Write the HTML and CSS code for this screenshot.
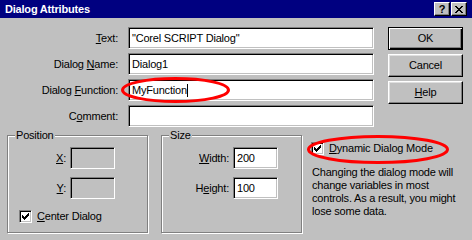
FILE: index.html
```html
<!DOCTYPE html>
<html lang="en">
<head>
    <meta charset="UTF-8">
    <title>Dialog Attributes</title>
    <link rel="stylesheet" href="styles.css">
</head>
<body>
<div class="window">
    <div class="titlebar">
        <span class="title">Dialog Attributes</span>
        <div class="caption-btns">
            <span class="cbtn">?</span>
            <span class="cbtn">
                <svg width="8" height="7" viewBox="0 0 8 7" shape-rendering="crispEdges"><path d="M0 0h2v1h-2z M6 0h2v1h-2z M1 1h2v1h-2z M5 1h2v1h-2z M2 2h4v1h-4z M3 3h2v1h-2z M2 4h4v1h-4z M1 5h2v1h-2z M5 5h2v1h-2z M0 6h2v1h-2z M6 6h2v1h-2z"/></svg>
            </span>
        </div>
    </div>

    <div class="client">
        <div class="top">
            <div class="form">
                <span class="lbl"><u>T</u>ext:</span>
                <div class="edit">"Corel SCRIPT Dialog"</div>
                <span class="lbl">Dialog <u>N</u>ame:</span>
                <div class="edit">Dialog1</div>
                <span class="lbl">Dialog <u>F</u>unction:</span>
                <div class="edit">MyFunction<span class="caret"></span></div>
                <span class="lbl">C<u>o</u>mment:</span>
                <div class="edit"></div>
            </div>
            <div class="buttons">
                <div class="btn default">OK</div>
                <div class="btn">Cancel</div>
                <div class="btn"><u>H</u>elp</div>
            </div>
        </div>

        <div class="bottom">
            <div class="group">
                <span class="group-title">Position</span>
                <div class="pos-grid">
                    <span class="lbl"><u>X</u>:</span>
                    <div class="edit small disabled"></div>
                    <span class="lbl"><u>Y</u>:</span>
                    <div class="edit small disabled"></div>
                </div>
                <div class="check-row center">
                    <span class="check">
                        <svg width="7" height="7" viewBox="0 0 7 7" shape-rendering="crispEdges"><path d="M6 0h1v1h-1z M5 1h2v1h-2z M0 2h1v1h-1z M4 2h3v1h-3z M0 3h2v1h-2z M3 3h3v1h-3z M0 4h5v1h-5z M1 5h3v1h-3z M2 6h1v1h-1z"/></svg>
                    </span>
                    <span><u>C</u>enter Dialog</span>
                </div>
            </div>

            <div class="group">
                <span class="group-title">Size</span>
                <div class="size-grid">
                    <span class="lbl"><u>W</u>idth:</span>
                    <div class="edit small">200</div>
                    <span class="lbl">H<u>e</u>ight:</span>
                    <div class="edit small">100</div>
                </div>
            </div>

            <div class="info">
                <div class="check-row">
                    <span class="check">
                        <svg width="7" height="7" viewBox="0 0 7 7" shape-rendering="crispEdges"><path d="M6 0h1v1h-1z M5 1h2v1h-2z M0 2h1v1h-1z M4 2h3v1h-3z M0 3h2v1h-2z M3 3h3v1h-3z M0 4h5v1h-5z M1 5h3v1h-3z M2 6h1v1h-1z"/></svg>
                    </span>
                    <span><u>D</u>ynamic Dialog Mode</span>
                </div>
                <p class="note">Changing the dialog mode will<br>change variables in most<br>controls. As a result, you might<br>lose some data.</p>
            </div>
        </div>
    </div>

    <!-- red marks drawn over the dialog -->
    <svg class="marks" width="472" height="240" viewBox="0 0 472 240">
        <ellipse cx="175.5" cy="90" rx="53" ry="11.5" fill="none" stroke="#f00" stroke-width="3"/>
        <ellipse cx="378" cy="149.5" rx="69.5" ry="13" fill="none" stroke="#f00" stroke-width="3"/>
    </svg>
</div>
</body>
</html>
```

FILE: styles.css
```css
body {
    margin: 0;
    font-family: "Liberation Sans", Arial, sans-serif;
    font-size: 11px;
    letter-spacing: -0.2px;
    color: #000;
    background: #c0c0c0;
}

u {text-decoration: underline; text-underline-offset: 1px;}

.window {
    position: relative;
    width: 472px;
    height: 240px;
    background: #c0c0c0;
    overflow: hidden;
}

/* TITLE BAR */
.titlebar {
    height: 18px;
    background: #000080;
    color: #fff;
    display: flex;
    align-items: center;
    justify-content: space-between;
    padding: 0 5px;
}
.title {
    font-weight: bold;
    line-height: 18px;
}
.caption-btns {
    display: flex;
    gap: 1px;
}
.cbtn {
    width: 16px;
    height: 14px;
    box-sizing: border-box;
    background: #c0c0c0;
    border: 1px solid;
    border-color: #fff #000 #000 #fff;
    box-shadow: inset -1px -1px #808080;
    color: #000;
    font-weight: bold;
    display: flex;
    align-items: center;
    justify-content: center;
    line-height: 1;
}

/* TOP PART */
.client {padding-top: 9px;}
.top {display: flex;}
.form {
    display: grid;
    grid-template-columns: 118px 246px;
    grid-auto-rows: 22px;
    column-gap: 10px;
    row-gap: 4px;
    align-items: center;
}
.lbl {text-align: right; white-space: nowrap;}

.edit {
    height: 22px;
    box-sizing: border-box;
    background: #fff;
    border: 1px solid;
    border-color: #808080 #fff #fff #808080;
    box-shadow: inset 1px 1px #000, inset -1px -1px #c0c0c0;
    padding-left: 3px;
    line-height: 19px;
    white-space: nowrap;
    display: flex;
    align-items: center;
}
.edit.small {width: 45px;}
.edit.disabled {background: #c0c0c0;}
.caret {
    display: inline-block;
    width: 1px;
    height: 13px;
    background: #000;
}

.buttons {
    margin-left: 14px;
    display: flex;
    flex-direction: column;
    gap: 4px;
}
.btn {
    width: 75px;
    height: 23px;
    box-sizing: border-box;
    border: 1px solid;
    border-color: #fff #000 #000 #fff;
    box-shadow: inset -1px -1px #808080, inset 1px 1px #dfdfdf;
    text-align: center;
    line-height: 21px;
}
.btn.default {
    border-color: #000;
    box-shadow: inset 1px 1px #fff, inset -1px -1px #000, inset -2px -2px #808080;
}

/* BOTTOM PART */
.bottom {
    display: flex;
    margin-top: 8px;
    padding-left: 7px;
    gap: 13px;
}
.group {
    position: relative;
    width: 141px;
    height: 98px;
    box-sizing: border-box;
    border: 1px solid #808080;
    box-shadow: inset 1px 1px #fff, 1px 1px #fff;
    padding-top: 11px;
}
.group-title {
    position: absolute;
    top: -7px;
    left: 7px;
    padding: 0 1px;
    line-height: 13px;
    background: #c0c0c0;
}
.pos-grid,
.size-grid {
    display: grid;
    grid-auto-rows: 22px;
    column-gap: 4px;
    row-gap: 8px;
    align-items: center;
}
.pos-grid {grid-template-columns: 58px 45px;}
.size-grid {grid-template-columns: 67px 45px;}

.check-row {
    display: flex;
    align-items: center;
    gap: 5px;
    line-height: 13px;
}
.check-row.center {margin: 11px 0 0 11px;}
.check {
    width: 13px;
    height: 13px;
    box-sizing: border-box;
    background: #fff;
    border: 1px solid;
    border-color: #808080 #fff #fff #808080;
    box-shadow: inset 1px 1px #000, inset -1px -1px #c0c0c0;
    display: flex;
    align-items: center;
    justify-content: center;
}

.info {
    margin-left: -4px;
    padding-top: 7px;
}
.note {
    margin: 11px 0 0 1px;
    line-height: 13px;
    white-space: nowrap;
}

.marks {
    position: absolute;
    top: 0;
    left: 0;
    pointer-events: none;
}
```
